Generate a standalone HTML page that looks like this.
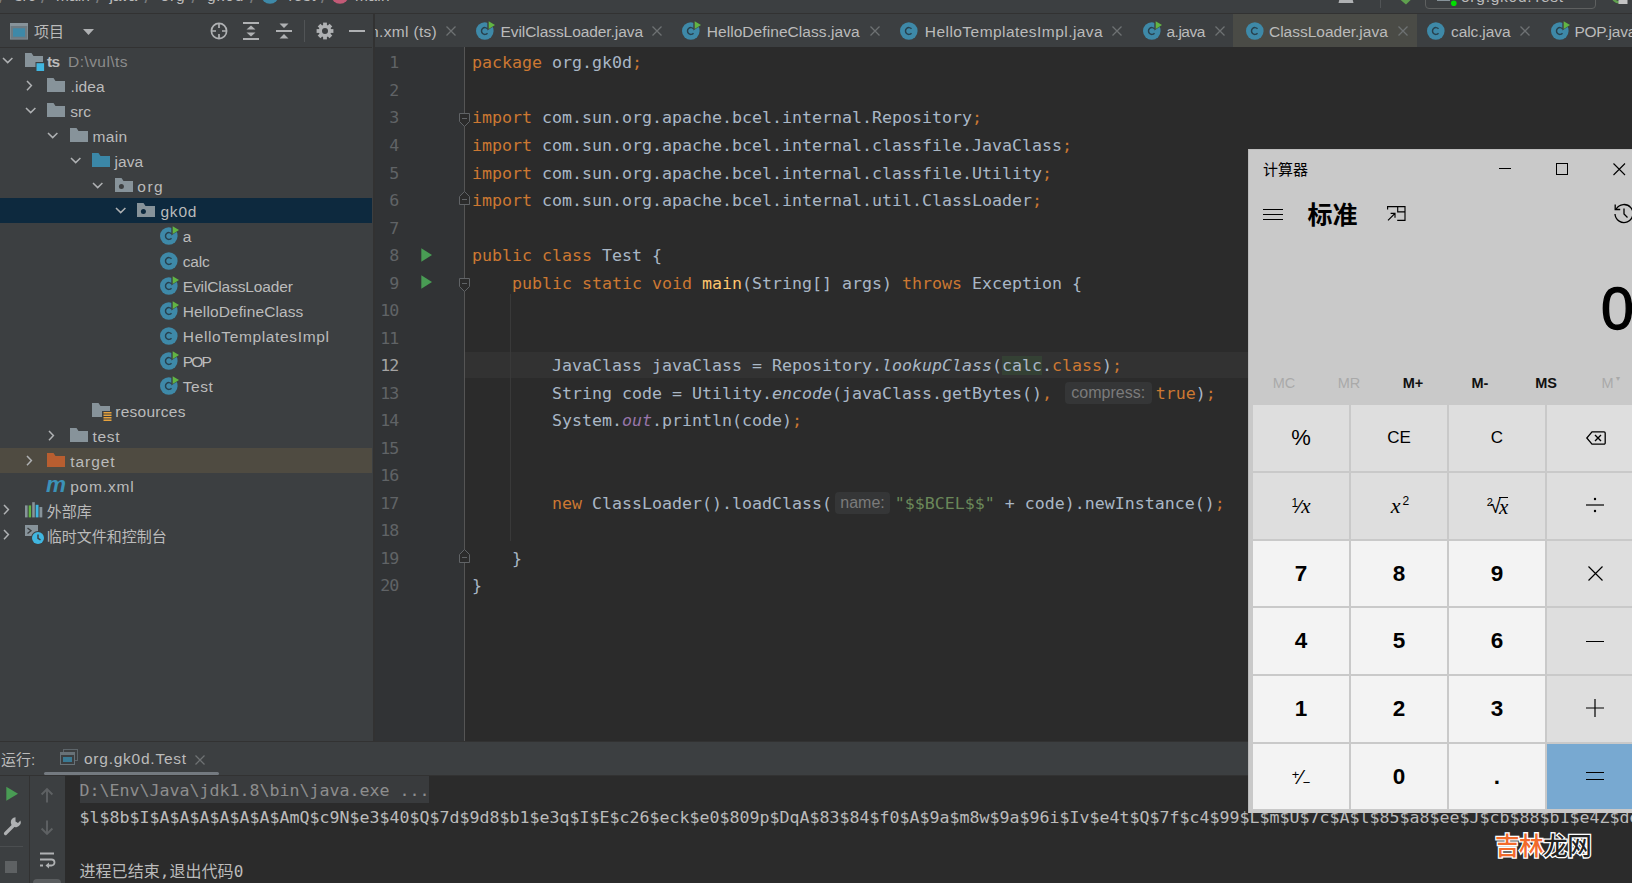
<!DOCTYPE html>
<html><head><meta charset="utf-8"><title>ts - Test.java</title>
<style>
*{box-sizing:border-box;margin:0;padding:0}
html,body{width:1632px;height:883px;overflow:hidden;background:#2b2b2b}
body{position:relative;font-family:"Liberation Sans","Noto Sans CJK SC",sans-serif;color:#bbbbbb;font-size:15.5px}
.abs,svg{position:absolute}
svg{overflow:visible}
#topbar{left:0;top:0;width:1632px;height:13px;background:#3c3f41;overflow:hidden}
#topline{left:0;top:13px;width:1632px;height:1px;background:#323232}
#left{left:0;top:14px;width:373px;height:727px;background:#3c3f41;overflow:hidden}
#leftline{left:0;top:33px;width:372px;height:1px;background:#323232}
#vdiv{left:373px;top:14px;width:1.8px;height:727px;background:#323232;z-index:3}
.row{position:absolute;left:0;width:372px;height:25px}
.t{position:absolute;white-space:nowrap;line-height:25px;height:25px;top:1px}
#tabs{left:374px;top:14px;width:1258px;height:33px;background:#3c3f41;overflow:hidden}
#tabs .t{line-height:33px;height:33px;top:1px}
#editor{left:374px;top:47px;width:1258px;height:694px;background:#2b2b2b;overflow:hidden}
#gutter{left:0;top:0;width:90px;height:694px;background:#313335}
#gline{left:90px;top:0;width:1px;height:694px;background:#555555}
.ln{position:absolute;left:0;width:24.4px;text-align:right;color:#606366;font-family:"DejaVu Sans Mono","Liberation Mono",monospace;font-size:16.61px;letter-spacing:-0.9px;height:27.5px;line-height:27.5px}
.cl{position:absolute;left:98px;white-space:pre;font-family:"DejaVu Sans Mono","Liberation Mono",monospace;font-size:16.61px;height:27.5px;line-height:27.5px;color:#a9b7c6}
.k{color:#cc7832}.s{color:#6a8759}.m{color:#ffc66d}.i{font-style:italic}.p{color:#9876aa;font-style:italic}
.hint{display:inline-block;font-family:"Liberation Sans",sans-serif;font-size:16px;color:#7b7b7b;background:#353637;border-radius:4px;height:22px;line-height:22px;vertical-align:middle;text-align:center;position:relative;top:-1px}
#bottom{left:0;top:741px;width:1632px;height:142px;background:#3c3f41;overflow:hidden}
#console{left:65px;top:35px;width:1567px;height:107px;background:#2b2b2b}
.co{position:absolute;left:14.5px;white-space:pre;font-family:"DejaVu Sans Mono","Liberation Mono","Noto Sans CJK SC",monospace;font-size:16.61px;height:27.5px;line-height:27.5px;color:#bbbbbb}
#calc{left:1248px;top:149px;width:400px;height:664px;background:#c9c9c9;color:#000;font-family:"Liberation Sans","Noto Sans CJK SC",sans-serif}
.cb{position:absolute;width:96px;height:66px;text-align:center;line-height:66px;color:#000}
.cb.op{background:#dedede}
.cb.num{background:#f3f3f3;font-weight:bold;font-size:22.5px}
.cb.eq{background:#78a9d1}
.mem{position:absolute;top:222px;width:66px;height:24px;line-height:24px;text-align:center;font-size:14.5px;font-weight:bold;color:#111}
.mem.dis{color:#a9a9a9;font-weight:normal}
</style></head><body>
<div id="topbar" class="abs">
<span class="t" style="left:14.7px;letter-spacing:0.17px;top:-17px;">src</span>
<span class="t" style="left:56px;letter-spacing:0.13px;top:-17px;">main</span>
<span class="t" style="left:109.6px;letter-spacing:-0.34px;top:-17px;">java</span>
<span class="t" style="left:160.5px;letter-spacing:0.80px;top:-17px;">org</span>
<span class="t" style="left:207px;letter-spacing:0.96px;top:-17px;">gk0d</span>
<span class="t" style="left:285.5px;letter-spacing:0.52px;top:-17px;">Test</span>
<span class="t" style="left:355px;letter-spacing:0.30px;top:-17px;">main</span>
<span class="t" style="left:-1px;top:-16.5px;font-size:19px;color:#7a7d7f">/</span>
<span class="t" style="left:41px;top:-16.5px;font-size:19px;color:#7a7d7f">/</span>
<span class="t" style="left:96px;top:-16.5px;font-size:19px;color:#7a7d7f">/</span>
<span class="t" style="left:144.5px;top:-16.5px;font-size:19px;color:#7a7d7f">/</span>
<span class="t" style="left:191.5px;top:-16.5px;font-size:19px;color:#7a7d7f">/</span>
<span class="t" style="left:250px;top:-16.5px;font-size:19px;color:#7a7d7f">/</span>
<span class="t" style="left:321px;top:-16.5px;font-size:19px;color:#7a7d7f">/</span>
<svg style="left:261px;top:-14.5px" width="18" height="18"><circle cx="9" cy="9" r="8.8" fill="#3e89a8"/></svg>
<svg style="left:330.5px;top:-14.5px" width="18" height="18"><circle cx="9" cy="9" r="8.8" fill="#c25a76"/></svg>
<div class="abs" style="left:1425px;top:-21px;width:171px;height:30px;border:1px solid #5e6060;border-radius:4px"></div>
<span class="t" style="left:1461px;letter-spacing:0.75px;top:-16px;">org.gk0d.Test</span>
<div class="abs" style="left:1437px;top:-8px;width:13px;height:9px;background:#4a6c7c;border:1px solid #87939a"></div>
<svg style="left:1450px;top:0" width="8" height="8"><circle cx="3.8" cy="3.2" r="2.8" fill="#00e000"/></svg>
<div class="abs" style="left:1380px;top:0;width:1px;height:8px;background:#515456"></div>
<svg style="left:1398px;top:-6px" width="16" height="12"><path d="M1.5 5 L8 10.6 L12.6 6 L11 4 Z" fill="#5fa04e"/></svg>
<svg style="left:1338px;top:-7px" width="16" height="10"><path d="M0.5 10 L3 0 H13 L15.5 10 Z" fill="#afb1b3"/></svg>
<svg style="left:1608px;top:-10px" width="24" height="16"><circle cx="11" cy="6" r="6.3" fill="none" stroke="#5fa04e" stroke-width="2.6"/><rect x="10.5" y="5" width="9" height="9" fill="#c4c4c4"/></svg>
</div><div id="topline" class="abs"></div>
<div id="left" class="abs">
<svg style="left:10px;top:9.3px" width="18" height="17" viewBox="0 0 18 17"><rect x="0.5" y="0.5" width="17" height="15.6" fill="#6e7b82" stroke="#7f8b91"/><rect x="0" y="0" width="18" height="3" fill="#87939a"/><rect x="3" y="5.3" width="12" height="8.4" fill="#3e89a8"/></svg>
<span class="t" style="left:34px;top:5px;font-size:15px">项目</span>
<svg style="left:83px;top:15px" width="12" height="7"><path d="M0 0 H11 L5.5 6 Z" fill="#afb1b3"/></svg>
<svg style="left:210px;top:8px" width="18" height="18" viewBox="0 0 18 18"><circle cx="9" cy="9" r="7.6" fill="none" stroke="#afb1b3" stroke-width="1.7"/><path d="M9 1 V6 M9 12 V17 M1 9 H6 M12 9 H17" stroke="#afb1b3" stroke-width="1.7"/></svg>
<svg style="left:243px;top:8px" width="16" height="18" viewBox="0 0 16 18"><path d="M0 1 H16 M0 17 H16" stroke="#afb1b3" stroke-width="2"/><path d="M3.5 7.5 L8 3.5 L12.5 7.5 Z M3.5 10.5 L8 14.5 L12.5 10.5 Z" fill="#afb1b3"/></svg>
<svg style="left:276px;top:8px" width="16" height="18" viewBox="0 0 16 18"><path d="M0 9 H16" stroke="#afb1b3" stroke-width="2"/><path d="M3.5 1.5 L8 6 L12.5 1.5 Z M3.5 16.5 L8 12 L12.5 16.5 Z" fill="#afb1b3"/></svg>
<div class="abs" style="left:304px;top:6px;width:1px;height:22px;background:#515456"></div>
<svg style="left:316px;top:8px" width="18" height="18" viewBox="-9 -9 18 18"><rect x="-1.9" y="-8.4" width="3.8" height="4" fill="#afb1b3" transform="rotate(0)"/><rect x="-1.9" y="-8.4" width="3.8" height="4" fill="#afb1b3" transform="rotate(45)"/><rect x="-1.9" y="-8.4" width="3.8" height="4" fill="#afb1b3" transform="rotate(90)"/><rect x="-1.9" y="-8.4" width="3.8" height="4" fill="#afb1b3" transform="rotate(135)"/><rect x="-1.9" y="-8.4" width="3.8" height="4" fill="#afb1b3" transform="rotate(180)"/><rect x="-1.9" y="-8.4" width="3.8" height="4" fill="#afb1b3" transform="rotate(225)"/><rect x="-1.9" y="-8.4" width="3.8" height="4" fill="#afb1b3" transform="rotate(270)"/><rect x="-1.9" y="-8.4" width="3.8" height="4" fill="#afb1b3" transform="rotate(315)"/><circle r="4.6" fill="none" stroke="#afb1b3" stroke-width="3.2"/></svg>
<div class="abs" style="left:349px;top:16px;width:16px;height:2px;background:#afb1b3"></div>
<div id="leftline" class="abs"></div>
<div class="abs" style="left:0;top:34px;width:372px;height:693px">
<div class="row" style="top:0px;"><svg style="left:2px;top:9px" width="12" height="8" viewBox="0 0 12 8"><path d="M1 1 L5.7 5.6 L10.4 1" fill="none" stroke="#afb1b3" stroke-width="1.5"/></svg><svg style="left:25px;top:5px" width="20" height="18" viewBox="0 0 20 18"><path d="M0 0 H6.5 L8.5 3 H18 V14 H0 Z" fill="#87939a"/><rect x="10.5" y="9" width="9" height="9.5" fill="#3c3f41"/><rect x="11.5" y="10.2" width="7.6" height="7.8" fill="#40b6e0"/></svg><span class="t" style="left:47px;letter-spacing:-0.78px;font-weight:bold;">ts</span><span class="t" style="left:68px;letter-spacing:0.44px;color:#8c8c8c;">D:\vul\ts</span></div>
<div class="row" style="top:25px;"><svg style="left:26.4px;top:6.5px" width="8" height="12" viewBox="0 0 8 12"><path d="M1 1 L5.4 5.6 L1 10.2" fill="none" stroke="#afb1b3" stroke-width="1.5"/></svg><svg style="left:47px;top:5px" width="18" height="14" viewBox="0 0 18 14"><path d="M0 0 H6.5 L8.5 3 H18 V14 H0 Z" fill="#87939a"/></svg><span class="t" style="left:70.5px;letter-spacing:0.10px;">.idea</span></div>
<div class="row" style="top:50px;"><svg style="left:25px;top:9px" width="12" height="8" viewBox="0 0 12 8"><path d="M1 1 L5.7 5.6 L10.4 1" fill="none" stroke="#afb1b3" stroke-width="1.5"/></svg><svg style="left:47px;top:5px" width="18" height="14" viewBox="0 0 18 14"><path d="M0 0 H6.5 L8.5 3 H18 V14 H0 Z" fill="#87939a"/></svg><span class="t" style="left:70.2px;letter-spacing:0.02px;">src</span></div>
<div class="row" style="top:75px;"><svg style="left:47px;top:9px" width="12" height="8" viewBox="0 0 12 8"><path d="M1 1 L5.7 5.6 L10.4 1" fill="none" stroke="#afb1b3" stroke-width="1.5"/></svg><svg style="left:70px;top:5px" width="18" height="14" viewBox="0 0 18 14"><path d="M0 0 H6.5 L8.5 3 H18 V14 H0 Z" fill="#87939a"/></svg><span class="t" style="left:92.5px;letter-spacing:0.30px;">main</span></div>
<div class="row" style="top:100px;"><svg style="left:70px;top:9px" width="12" height="8" viewBox="0 0 12 8"><path d="M1 1 L5.7 5.6 L10.4 1" fill="none" stroke="#afb1b3" stroke-width="1.5"/></svg><svg style="left:92px;top:5px" width="18" height="14" viewBox="0 0 18 14"><path d="M0 0 H6.5 L8.5 3 H18 V14 H0 Z" fill="#3b87a7"/></svg><span class="t" style="left:114.6px;letter-spacing:-0.01px;">java</span></div>
<div class="row" style="top:125px;"><svg style="left:92px;top:9px" width="12" height="8" viewBox="0 0 12 8"><path d="M1 1 L5.7 5.6 L10.4 1" fill="none" stroke="#afb1b3" stroke-width="1.5"/></svg><svg style="left:115px;top:5px" width="18" height="14" viewBox="0 0 18 14"><path d="M0 0 H6.5 L8.5 3 H18 V14 H0 Z" fill="#87939a"/><circle cx="6.4" cy="8.6" r="2.5" fill="#3c3f41"/></svg><span class="t" style="left:137.3px;letter-spacing:1.50px;">org</span></div>
<div class="row" style="top:150px;background:#0d293e;"><svg style="left:115px;top:9px" width="12" height="8" viewBox="0 0 12 8"><path d="M1 1 L5.7 5.6 L10.4 1" fill="none" stroke="#afb1b3" stroke-width="1.5"/></svg><svg style="left:137px;top:5px" width="18" height="14" viewBox="0 0 18 14"><path d="M0 0 H6.5 L8.5 3 H18 V14 H0 Z" fill="#87939a"/><circle cx="6.4" cy="8.6" r="2.5" fill="#0d293e"/></svg><span class="t" style="left:160.4px;letter-spacing:0.83px;">gk0d</span></div>
<div class="row" style="top:175px;"><svg style="left:160px;top:0px" width="20" height="22" viewBox="0 0 20 22"><circle cx="8.8" cy="13" r="8.8" fill="#3e89a8"/><path d="M11.5 10.8 A3.4 3.4 0 1 0 11.5 15.2" fill="none" stroke="#28414e" stroke-width="1.45"/><path d="M11.3 2 L19.5 7 L11.3 12.4 Z" fill="#3c3f41"/><path d="M12.7 3.3 L19 7 L12.7 11 Z" fill="#62b543"/></svg><span class="t" style="left:182.8px;letter-spacing:0.00px;">a</span></div>
<div class="row" style="top:200px;"><svg style="left:160px;top:0px" width="20" height="22" viewBox="0 0 20 22"><circle cx="8.8" cy="13" r="8.8" fill="#3e89a8"/><path d="M11.5 10.8 A3.4 3.4 0 1 0 11.5 15.2" fill="none" stroke="#28414e" stroke-width="1.45"/></svg><span class="t" style="left:182.8px;letter-spacing:-0.19px;">calc</span></div>
<div class="row" style="top:225px;"><svg style="left:160px;top:0px" width="20" height="22" viewBox="0 0 20 22"><circle cx="8.8" cy="13" r="8.8" fill="#3e89a8"/><path d="M11.5 10.8 A3.4 3.4 0 1 0 11.5 15.2" fill="none" stroke="#28414e" stroke-width="1.45"/><path d="M11.3 2 L19.5 7 L11.3 12.4 Z" fill="#3c3f41"/><path d="M12.7 3.3 L19 7 L12.7 11 Z" fill="#62b543"/></svg><span class="t" style="left:182.8px;letter-spacing:-0.14px;">EvilClassLoader</span></div>
<div class="row" style="top:250px;"><svg style="left:160px;top:0px" width="20" height="22" viewBox="0 0 20 22"><circle cx="8.8" cy="13" r="8.8" fill="#3e89a8"/><path d="M11.5 10.8 A3.4 3.4 0 1 0 11.5 15.2" fill="none" stroke="#28414e" stroke-width="1.45"/><path d="M11.3 2 L19.5 7 L11.3 12.4 Z" fill="#3c3f41"/><path d="M12.7 3.3 L19 7 L12.7 11 Z" fill="#62b543"/></svg><span class="t" style="left:182.8px;letter-spacing:0.11px;">HelloDefineClass</span></div>
<div class="row" style="top:275px;"><svg style="left:160px;top:0px" width="20" height="22" viewBox="0 0 20 22"><circle cx="8.8" cy="13" r="8.8" fill="#3e89a8"/><path d="M11.5 10.8 A3.4 3.4 0 1 0 11.5 15.2" fill="none" stroke="#28414e" stroke-width="1.45"/></svg><span class="t" style="left:182.8px;letter-spacing:0.64px;">HelloTemplatesImpl</span></div>
<div class="row" style="top:300px;"><svg style="left:160px;top:0px" width="20" height="22" viewBox="0 0 20 22"><circle cx="8.8" cy="13" r="8.8" fill="#3e89a8"/><path d="M11.5 10.8 A3.4 3.4 0 1 0 11.5 15.2" fill="none" stroke="#28414e" stroke-width="1.45"/><path d="M11.3 2 L19.5 7 L11.3 12.4 Z" fill="#3c3f41"/><path d="M12.7 3.3 L19 7 L12.7 11 Z" fill="#62b543"/></svg><span class="t" style="left:182.8px;letter-spacing:-1.87px;">POP</span></div>
<div class="row" style="top:325px;"><svg style="left:160px;top:0px" width="20" height="22" viewBox="0 0 20 22"><circle cx="8.8" cy="13" r="8.8" fill="#3e89a8"/><path d="M11.5 10.8 A3.4 3.4 0 1 0 11.5 15.2" fill="none" stroke="#28414e" stroke-width="1.45"/><path d="M11.3 2 L19.5 7 L11.3 12.4 Z" fill="#3c3f41"/><path d="M12.7 3.3 L19 7 L12.7 11 Z" fill="#62b543"/></svg><span class="t" style="left:182.8px;letter-spacing:0.52px;">Test</span></div>
<div class="row" style="top:350px;"><svg style="left:92px;top:5px" width="20" height="19" viewBox="0 0 20 19"><path d="M0 0 H6.5 L8.5 3 H18 V14 H0 Z" fill="#87939a"/><rect x="10" y="8" width="10" height="11" fill="#3c3f41"/><path d="M11.5 9.8 H19.5 M11.5 12.3 H19.5 M11.5 14.8 H19.5 M11.5 17.3 H19.5" stroke="#e8a33d" stroke-width="1.4"/></svg><span class="t" style="left:115.3px;letter-spacing:0.26px;">resources</span></div>
<div class="row" style="top:375px;"><svg style="left:48px;top:6.5px" width="8" height="12" viewBox="0 0 8 12"><path d="M1 1 L5.4 5.6 L1 10.2" fill="none" stroke="#afb1b3" stroke-width="1.5"/></svg><svg style="left:70px;top:5px" width="18" height="14" viewBox="0 0 18 14"><path d="M0 0 H6.5 L8.5 3 H18 V14 H0 Z" fill="#87939a"/></svg><span class="t" style="left:92.5px;letter-spacing:0.71px;">test</span></div>
<div class="row" style="top:400px;background:#4f4b41;"><svg style="left:26.4px;top:6.5px" width="8" height="12" viewBox="0 0 8 12"><path d="M1 1 L5.4 5.6 L1 10.2" fill="none" stroke="#afb1b3" stroke-width="1.5"/></svg><svg style="left:47px;top:5px" width="18" height="14" viewBox="0 0 18 14"><path d="M0 0 H6.5 L8.5 3 H18 V14 H0 Z" fill="#b85e30"/></svg><span class="t" style="left:70.2px;letter-spacing:0.95px;">target</span></div>
<div class="row" style="top:425px;"><span class="t" style="left:46px;top:-1px;font-size:22.5px;font-weight:bold;font-style:italic;color:#3b92b8;letter-spacing:-1px">m</span><span class="t" style="left:70.2px;letter-spacing:0.81px;">pom.xml</span></div>
<div class="row" style="top:450px;"><svg style="left:3.4px;top:6.2px" width="8" height="12" viewBox="0 0 8 12"><path d="M1 1 L5.4 5.6 L1 10.2" fill="none" stroke="#afb1b3" stroke-width="1.5"/></svg><svg style="left:25px;top:4px" width="18" height="16" viewBox="0 0 18 16"><rect x="0" y="3.4" width="2.6" height="12" fill="#87939a"/><rect x="3.7" y="3.4" width="2.4" height="12" fill="#62b543"/><rect x="7.2" y="0.2" width="2.6" height="15.2" fill="#87939a"/><rect x="10.7" y="2.8" width="2.8" height="12.6" fill="#40b6e0"/><rect x="14.5" y="5" width="2.8" height="10.4" fill="#87939a"/></svg><span class="t" style="left:46.8px;font-size:15px">外部库</span></div>
<div class="row" style="top:475px;"><svg style="left:3.4px;top:6.2px" width="8" height="12" viewBox="0 0 8 12"><path d="M1 1 L5.4 5.6 L1 10.2" fill="none" stroke="#afb1b3" stroke-width="1.5"/></svg><svg style="left:25px;top:2px" width="20" height="20" viewBox="0 0 20 20"><rect x="0" y="0" width="13" height="11" fill="#87939a"/><path d="M2.5 3 L6 5.8 L2.5 8.5" fill="none" stroke="#3c3f41" stroke-width="1.4"/><circle cx="13" cy="13" r="7" fill="#3c3f41"/><circle cx="13" cy="13" r="6" fill="#40b6e0"/><path d="M13 9.5 V13.3 L15.5 14.8" fill="none" stroke="#3c3f41" stroke-width="1.5"/></svg><span class="t" style="left:46.8px;font-size:15px">临时文件和控制台</span></div>
</div>
</div><div id="vdiv" class="abs"></div>
<div id="tabs" class="abs">
<div class="abs" style="left:859px;top:0;width:184px;height:33px;background:#4a4b46"></div>
<span class="t" style="left:-26.1px;letter-spacing:0.33px;">pom.xml (ts)</span>
<svg style="left:72px;top:12px" width="10" height="10"><path d="M0.5 0.5 L9.5 9.5 M9.5 0.5 L0.5 9.5" stroke="#6e7173" stroke-width="1.3"/></svg>
<svg style="left:102px;top:4px" width="20" height="22" viewBox="0 0 20 22"><circle cx="8.8" cy="13" r="8.8" fill="#3e89a8"/><path d="M11.5 10.8 A3.4 3.4 0 1 0 11.5 15.2" fill="none" stroke="#28414e" stroke-width="1.45"/><path d="M11.3 2 L19.5 7 L11.3 12.4 Z" fill="#3c3f41"/><path d="M12.7 3.3 L19 7 L12.7 11 Z" fill="#62b543"/></svg><span class="t" style="left:126.5px;letter-spacing:-0.07px;">EvilClassLoader.java</span><svg style="left:278px;top:12px" width="10" height="10"><path d="M0.5 0.5 L9.5 9.5 M9.5 0.5 L0.5 9.5" stroke="#6e7173" stroke-width="1.3"/></svg>
<svg style="left:308px;top:4px" width="20" height="22" viewBox="0 0 20 22"><circle cx="8.8" cy="13" r="8.8" fill="#3e89a8"/><path d="M11.5 10.8 A3.4 3.4 0 1 0 11.5 15.2" fill="none" stroke="#28414e" stroke-width="1.45"/><path d="M11.3 2 L19.5 7 L11.3 12.4 Z" fill="#3c3f41"/><path d="M12.7 3.3 L19 7 L12.7 11 Z" fill="#62b543"/></svg><span class="t" style="left:332.70000000000005px;letter-spacing:0.07px;">HelloDefineClass.java</span><svg style="left:496px;top:12px" width="10" height="10"><path d="M0.5 0.5 L9.5 9.5 M9.5 0.5 L0.5 9.5" stroke="#6e7173" stroke-width="1.3"/></svg>
<svg style="left:526px;top:4px" width="20" height="22" viewBox="0 0 20 22"><circle cx="8.8" cy="13" r="8.8" fill="#3e89a8"/><path d="M11.5 10.8 A3.4 3.4 0 1 0 11.5 15.2" fill="none" stroke="#28414e" stroke-width="1.45"/></svg><span class="t" style="left:550.8px;letter-spacing:0.45px;">HelloTemplatesImpl.java</span><svg style="left:738px;top:12px" width="10" height="10"><path d="M0.5 0.5 L9.5 9.5 M9.5 0.5 L0.5 9.5" stroke="#6e7173" stroke-width="1.3"/></svg>
<svg style="left:768.5px;top:4px" width="20" height="22" viewBox="0 0 20 22"><circle cx="8.8" cy="13" r="8.8" fill="#3e89a8"/><path d="M11.5 10.8 A3.4 3.4 0 1 0 11.5 15.2" fill="none" stroke="#28414e" stroke-width="1.45"/><path d="M11.3 2 L19.5 7 L11.3 12.4 Z" fill="#3c3f41"/><path d="M12.7 3.3 L19 7 L12.7 11 Z" fill="#62b543"/></svg><span class="t" style="left:792.5px;letter-spacing:-0.51px;">a.java</span><svg style="left:841px;top:12px" width="10" height="10"><path d="M0.5 0.5 L9.5 9.5 M9.5 0.5 L0.5 9.5" stroke="#6e7173" stroke-width="1.3"/></svg>
<svg style="left:872px;top:4px" width="20" height="22" viewBox="0 0 20 22"><circle cx="8.8" cy="13" r="8.8" fill="#3e89a8"/><path d="M11.5 10.8 A3.4 3.4 0 1 0 11.5 15.2" fill="none" stroke="#28414e" stroke-width="1.45"/></svg><span class="t" style="left:895px;letter-spacing:-0.01px;">ClassLoader.java</span><svg style="left:1024px;top:12px" width="10" height="10"><path d="M0.5 0.5 L9.5 9.5 M9.5 0.5 L0.5 9.5" stroke="#6e7173" stroke-width="1.3"/></svg>
<svg style="left:1053px;top:4px" width="20" height="22" viewBox="0 0 20 22"><circle cx="8.8" cy="13" r="8.8" fill="#3e89a8"/><path d="M11.5 10.8 A3.4 3.4 0 1 0 11.5 15.2" fill="none" stroke="#28414e" stroke-width="1.45"/></svg><span class="t" style="left:1077px;letter-spacing:-0.10px;">calc.java</span><svg style="left:1146px;top:12px" width="10" height="10"><path d="M0.5 0.5 L9.5 9.5 M9.5 0.5 L0.5 9.5" stroke="#6e7173" stroke-width="1.3"/></svg>
<svg style="left:1176.7px;top:4px" width="20" height="22" viewBox="0 0 20 22"><circle cx="8.8" cy="13" r="8.8" fill="#3e89a8"/><path d="M11.5 10.8 A3.4 3.4 0 1 0 11.5 15.2" fill="none" stroke="#28414e" stroke-width="1.45"/><path d="M11.3 2 L19.5 7 L11.3 12.4 Z" fill="#3c3f41"/><path d="M12.7 3.3 L19 7 L12.7 11 Z" fill="#62b543"/></svg><span class="t" style="left:1200.4px;letter-spacing:-0.21px;">POP.java</span><svg style="left:1271px;top:12px" width="10" height="10"><path d="M0.5 0.5 L9.5 9.5 M9.5 0.5 L0.5 9.5" stroke="#6e7173" stroke-width="1.3"/></svg>
</div>
<div id="editor" class="abs"><div id="gutter" class="abs"></div><div id="gline" class="abs"></div>
<div class="abs" style="left:91px;top:304.99px;width:1170px;height:26.5px;background:#323232"></div>
<div class="ln" style="top:2.40px">1</div>
<div class="ln" style="top:29.93px">2</div>
<div class="ln" style="top:57.45px">3</div>
<div class="ln" style="top:84.98px">4</div>
<div class="ln" style="top:112.50px">5</div>
<div class="ln" style="top:140.03px">6</div>
<div class="ln" style="top:167.56px">7</div>
<div class="ln" style="top:195.08px">8</div>
<div class="ln" style="top:222.61px">9</div>
<div class="ln" style="top:250.13px">10</div>
<div class="ln" style="top:277.66px">11</div>
<div class="ln" style="top:305.19px;color:#a4a3a3">12</div>
<div class="ln" style="top:332.71px">13</div>
<div class="ln" style="top:360.24px">14</div>
<div class="ln" style="top:387.76px">15</div>
<div class="ln" style="top:415.29px">16</div>
<div class="ln" style="top:442.82px">17</div>
<div class="ln" style="top:470.34px">18</div>
<div class="ln" style="top:497.87px">19</div>
<div class="ln" style="top:525.39px">20</div>
<div class="cl" style="top:2.40px"><span class="k">package</span> org.gk0d<span class="k">;</span></div>
<div class="cl" style="top:57.45px"><span class="k">import</span> com.sun.org.apache.bcel.internal.Repository<span class="k">;</span></div>
<div class="cl" style="top:84.98px"><span class="k">import</span> com.sun.org.apache.bcel.internal.classfile.JavaClass<span class="k">;</span></div>
<div class="cl" style="top:112.50px"><span class="k">import</span> com.sun.org.apache.bcel.internal.classfile.Utility<span class="k">;</span></div>
<div class="cl" style="top:140.03px"><span class="k">import</span> com.sun.org.apache.bcel.internal.util.ClassLoader<span class="k">;</span></div>
<div class="cl" style="top:195.08px"><span class="k">public class</span> Test {</div>
<div class="cl" style="top:222.61px">    <span class="k">public static void</span> <span class="m">main</span>(String[] args) <span class="k">throws</span> Exception {</div>
<div class="cl" style="top:305.19px">        JavaClass javaClass = Repository.<span class="i">lookupClass</span>(<span style="background:#344134">calc</span>.<span class="k">class</span>)<span class="k">;</span></div>
<div class="cl" style="top:332.71px">        String code = Utility.<span class="i">encode</span>(javaClass.getBytes()<span class="k">,</span> <span class="hint" style="width:87px;margin:0 4px 0 2.7px">compress:</span><span class="k">true</span>)<span class="k">;</span></div>
<div class="cl" style="top:360.24px">        System.<span class="p">out</span>.println(code)<span class="k">;</span></div>
<div class="cl" style="top:442.82px">        <span class="k">new</span> ClassLoader().loadClass(<span class="hint" style="width:55.4px;margin:0 4.6px 0 2.8px">name:</span><span class="s">"$$BCEL$$"</span> + code).newInstance()<span class="k">;</span></div>
<div class="cl" style="top:497.87px">    }</div>
<div class="cl" style="top:525.39px">}</div>
<div class="abs" style="left:136px;top:247.1px;width:1px;height:246.7px;background:#393939"></div>
<svg style="left:46.7px;top:200.7px" width="12" height="14"><path d="M0.3 0.3 L11 7 L0.3 13.7 Z" fill="#499c54"/></svg>
<svg style="left:46.7px;top:228.2px" width="12" height="14"><path d="M0.3 0.3 L11 7 L0.3 13.7 Z" fill="#499c54"/></svg>
<svg style="left:85px;top:65.5px" width="11" height="14"><path d="M0.5 0.5 H10.5 V8.5 L5.5 13.5 L0.5 8.5 Z" fill="#2b2b2b" stroke="#606366"/><path d="M3 5.5 H8" stroke="#606366"/></svg><svg style="left:85px;top:144.0px" width="11" height="14"><path d="M0.5 13.5 H10.5 V5.5 L5.5 0.5 L0.5 5.5 Z" fill="#2b2b2b" stroke="#606366"/><path d="M3 8.5 H8" stroke="#606366"/></svg><svg style="left:85px;top:230.6px" width="11" height="14"><path d="M0.5 0.5 H10.5 V8.5 L5.5 13.5 L0.5 8.5 Z" fill="#2b2b2b" stroke="#606366"/><path d="M3 5.5 H8" stroke="#606366"/></svg><svg style="left:85px;top:501.9px" width="11" height="14"><path d="M0.5 13.5 H10.5 V5.5 L5.5 0.5 L0.5 5.5 Z" fill="#2b2b2b" stroke="#606366"/><path d="M3 8.5 H8" stroke="#606366"/></svg>
</div>
<div id="bottom" class="abs">
<div class="abs" style="left:0;top:0;width:1632px;height:1px;background:#323232"></div>
<span class="t" style="left:1px;top:5.8px;font-size:15px">运行:</span>
<svg style="left:60px;top:8px" width="18" height="16" viewBox="0 0 18 16"><rect x="3.5" y="0.5" width="14" height="11" fill="none" stroke="#5d656a"/><rect x="0.5" y="3.5" width="14" height="12" fill="#3c3f41" stroke="#687278"/><rect x="0" y="3" width="15" height="3" fill="#687278"/><rect x="3" y="8" width="9" height="5" fill="#3a7a94"/></svg>
<span class="t" style="left:84px;letter-spacing:0.75px;top:5px;">org.gk0d.Test</span>
<svg style="left:195px;top:14px" width="10" height="10"><path d="M0.5 0.5 L9.5 9.5 M9.5 0.5 L0.5 9.5" stroke="#6e7173" stroke-width="1.3"/></svg>
<div class="abs" style="left:44px;top:30.5px;width:175px;height:3.5px;background:#747a80;border-radius:2px"></div>
<div class="abs" style="left:0;top:34px;width:1632px;height:1px;background:#323232"></div>
<div class="abs" style="left:29px;top:35px;width:1px;height:107px;background:#323232"></div>
<svg style="left:6px;top:44.5px" width="14" height="16"><path d="M0.3 0.8 L12 7.8 L0.3 14.8 Z" fill="#499c54"/></svg>
<svg style="left:2.5px;top:75px" width="20" height="20" viewBox="0 0 20 20"><path d="M2.5 17.5 L10 10" stroke="#afb1b3" stroke-width="3.2" stroke-linecap="round"/><path d="M17.5 4.5 A5 5 0 1 1 12.5 1.2 L12.5 5.5 L15 7 Z" fill="#afb1b3"/></svg>
<div class="abs" style="left:0;top:105px;width:23px;height:1px;background:#4b4e50"></div>
<div class="abs" style="left:5px;top:120px;width:12px;height:12px;background:#5e6163"></div>
<svg style="left:40px;top:46px" width="14" height="16"><path d="M7 15.5 V2 M1.6 7.5 L7 2 L12.4 7.5" fill="none" stroke="#5e6163" stroke-width="1.9"/></svg>
<svg style="left:40px;top:78.5px" width="14" height="16"><path d="M7 0.5 V14 M1.6 8.5 L7 14 L12.4 8.5" fill="none" stroke="#5e6163" stroke-width="1.9"/></svg>
<svg style="left:39px;top:110px" width="18" height="17" viewBox="0 0 18 16"><path d="M1 2 H15 M1 8 H12.5 A3 3 0 0 1 12.5 14 H8 M1 14 H4" fill="none" stroke="#afb1b3" stroke-width="1.8"/><path d="M10 11 L6.5 14 L10 17 Z" fill="#afb1b3"/></svg>
<div class="abs" style="left:33px;top:138px;width:28px;height:8px;background:#5a5d5f;border-radius:4px"></div>
<div id="console" class="abs">
<div class="abs" style="left:15px;top:0;width:349px;height:27px;background:#393b3d"></div>
<div class="co" style="top:0.5px;color:#8d8d8d">D:\Env\Java\jdk1.8\bin\java.exe ...</div>
<div class="co" style="top:27.9px">$l$8b$I$A$A$A$A$A$A$AmQ$c9N$e3$40$Q$7d$9d8$b1$e3q$I$E$c26$eck$e0$809p$DqA$83$84$f0$A$9a$m8w$9a$96i$Iv$e4t$Q$7f$c4$99$L$m$U$7c$A$l$85$a8$ee$J$cb$88$b1$e4Z$de$ab$aaW$ae$be$be$3d$3e$D$d8$c0J</div>
<div class="co" style="top:82.0px;font-size:16px;letter-spacing:0.05px">进程已结束,退出代码0</div>
</div></div>
<div id="calc" class="abs">
<div class="abs" style="left:0;top:0;width:400px;height:1px;background:#bdbdbd"></div><div class="abs" style="left:0;top:0;width:1px;height:664px;background:#b9b9b9"></div>
<span class="abs" style="left:15px;top:10.5px;font-size:15px;line-height:20px;color:#000">计算器</span>
<div class="abs" style="left:251px;top:18.6px;width:12px;height:1px;background:#000"></div>
<div class="abs" style="left:308px;top:14px;width:12px;height:12px;border:1px solid #000"></div>
<svg style="left:365px;top:14px" width="13" height="13"><path d="M0.5 0.5 L12 12 M12 0.5 L0.5 12" stroke="#000" stroke-width="1.1"/></svg>
<svg style="left:15px;top:59px" width="21" height="13"><path d="M0 1.5 H20 M0 6.5 H20 M0 11.5 H20" stroke="#000" stroke-width="1.1"/></svg>
<span class="abs" style="left:59.5px;top:47.8px;font-size:25px;line-height:36px;font-weight:bold;color:#000">标准</span>
<svg style="left:138.5px;top:57.3px" width="19" height="16" viewBox="0 0 19 16"><path d="M0.6 3.5 V0.6 H18 V14.4 H10.2 M10.7 0.6 V5.9 H18 M1 14.4 L8 7.4 M3.6 7.4 H8 V11.8" fill="none" stroke="#000" stroke-width="1.15"/></svg>
<svg style="left:365px;top:54px" width="22" height="22" viewBox="0 0 22 22"><path d="M3.2 6 A9 9 0 1 1 2 11" fill="none" stroke="#000" stroke-width="1.3"/><path d="M2.2 1.5 V6.5 H7.2" fill="none" stroke="#000" stroke-width="1.3"/><path d="M11 5.5 V11 L14.5 14.5" fill="none" stroke="#000" stroke-width="1.3"/></svg>
<span class="abs" style="left:353px;top:125px;font-size:59px;line-height:70px;font-weight:normal;-webkit-text-stroke:1.3px #000;color:#000;transform-origin:0 0">0</span>
<span class="mem dis" style="left:3px">MC</span>
<span class="mem dis" style="left:68px">MR</span>
<span class="mem" style="left:132px">M+</span>
<span class="mem" style="left:199px">M-</span>
<span class="mem" style="left:265px">MS</span>
<span class="mem dis" style="left:330px">M<span style="font-size:7px;position:relative;top:-7px;left:1px">▼</span></span>
<div class="cb op" style="left:5px;top:256px;height:65.6px;font-size:22px">%</div>
<div class="cb op" style="left:103px;top:256px;height:65.6px;font-size:17px">CE</div>
<div class="cb op" style="left:201px;top:256px;height:65.6px;font-size:17px">C</div>
<div class="cb op" style="left:299px;top:256px;height:65.6px;"><svg style="left:39px;top:26px" width="20" height="14" viewBox="0 0 20 14"><path d="M6 0.8 H18 A1.2 1.2 0 0 1 19.2 2 V12 A1.2 1.2 0 0 1 18 13.2 H6 L0.8 7 Z" fill="none" stroke="#000" stroke-width="1.3"/><path d="M9 4 L15 10 M15 4 L9 10" stroke="#000" stroke-width="1.4"/></svg></div>
<div class="cb op" style="left:5px;top:324px;height:65.6px;"><span style="font-size:12px;position:relative;top:-6px">1</span><span style="font-size:19px">⁄</span><span style="font-family:'Liberation Serif',serif;font-style:italic;font-size:21px">x</span></div>
<div class="cb op" style="left:103px;top:324px;height:65.6px;"><span style="font-family:'Liberation Serif',serif;font-style:italic;font-size:22px">x</span><span style="font-size:12px;position:relative;top:-8px;left:2px">2</span></div>
<div class="cb op" style="left:201px;top:324px;height:65.6px;"><span style="font-size:11px;position:relative;top:-7px;left:3px">2</span><span style="font-size:20px">√</span><span style="font-family:'Liberation Serif',serif;font-style:italic;font-size:21px;border-top:1.3px solid #000;line-height:18px;display:inline-block;position:relative;top:1px;left:-2px">x</span></div>
<div class="cb op" style="left:299px;top:324px;height:65.6px;"><svg style="left:39px;top:23px" width="18" height="18"><path d="M0 9 H18" stroke="#000" stroke-width="1.2"/><circle cx="9" cy="3" r="1.2"/><circle cx="9" cy="15" r="1.2"/></svg></div>
<div class="cb num" style="left:5px;top:391.7px;height:65.6px;">7</div>
<div class="cb num" style="left:103px;top:391.7px;height:65.6px;">8</div>
<div class="cb num" style="left:201px;top:391.7px;height:65.6px;">9</div>
<div class="cb num" style="left:5px;top:459.4px;height:65.6px;">4</div>
<div class="cb num" style="left:103px;top:459.4px;height:65.6px;">5</div>
<div class="cb num" style="left:201px;top:459.4px;height:65.6px;">6</div>
<div class="cb num" style="left:5px;top:527px;height:65.6px;">1</div>
<div class="cb num" style="left:103px;top:527px;height:65.6px;">2</div>
<div class="cb num" style="left:201px;top:527px;height:65.6px;">3</div>
<div class="cb op" style="left:299px;top:391.7px;height:65.6px;"><svg style="left:41px;top:25px" width="15" height="15"><path d="M0.5 0.5 L14.5 14.5 M14.5 0.5 L0.5 14.5" stroke="#000" stroke-width="1.2"/></svg></div>
<div class="cb op" style="left:299px;top:459.4px;height:65.6px;"><div class="abs" style="left:39px;top:32.5px;width:18px;height:1px;background:#000"></div></div>
<div class="cb op" style="left:299px;top:527px;height:65.6px;"><svg style="left:39px;top:23px" width="18" height="18"><path d="M0 9 H18 M9 0 V18" stroke="#000" stroke-width="1.2"/></svg></div>
<div class="cb num" style="left:5px;top:594.6px;height:65.6px;"><span style="font-weight:normal;font-size:13px;position:relative;top:-5px">+</span><span style="font-weight:normal;font-size:20px">⁄</span><span style="font-weight:normal;font-size:13px;position:relative;top:3px">−</span></div>
<div class="cb num" style="left:103px;top:594.6px;height:65.6px;">0</div>
<div class="cb num" style="left:201px;top:594.6px;height:65.6px;">.</div>
<div class="cb eq" style="left:299px;top:594.6px;height:65.6px;"><svg style="left:39px;top:27px" width="18" height="10"><path d="M0 1.5 H18 M0 8.5 H18" stroke="#000" stroke-width="1.2"/></svg></div>
</div>
<span class="abs" style="left:1495px;top:828px;font-size:24.5px;line-height:38px;font-weight:500;letter-spacing:-0.4px;font-family:'Liberation Sans','Noto Sans CJK SC',sans-serif;color:#f26a2b;-webkit-text-stroke:2.6px #fff;paint-order:stroke fill">吉林<span style="color:#222">龙网</span></span>
</body></html>
